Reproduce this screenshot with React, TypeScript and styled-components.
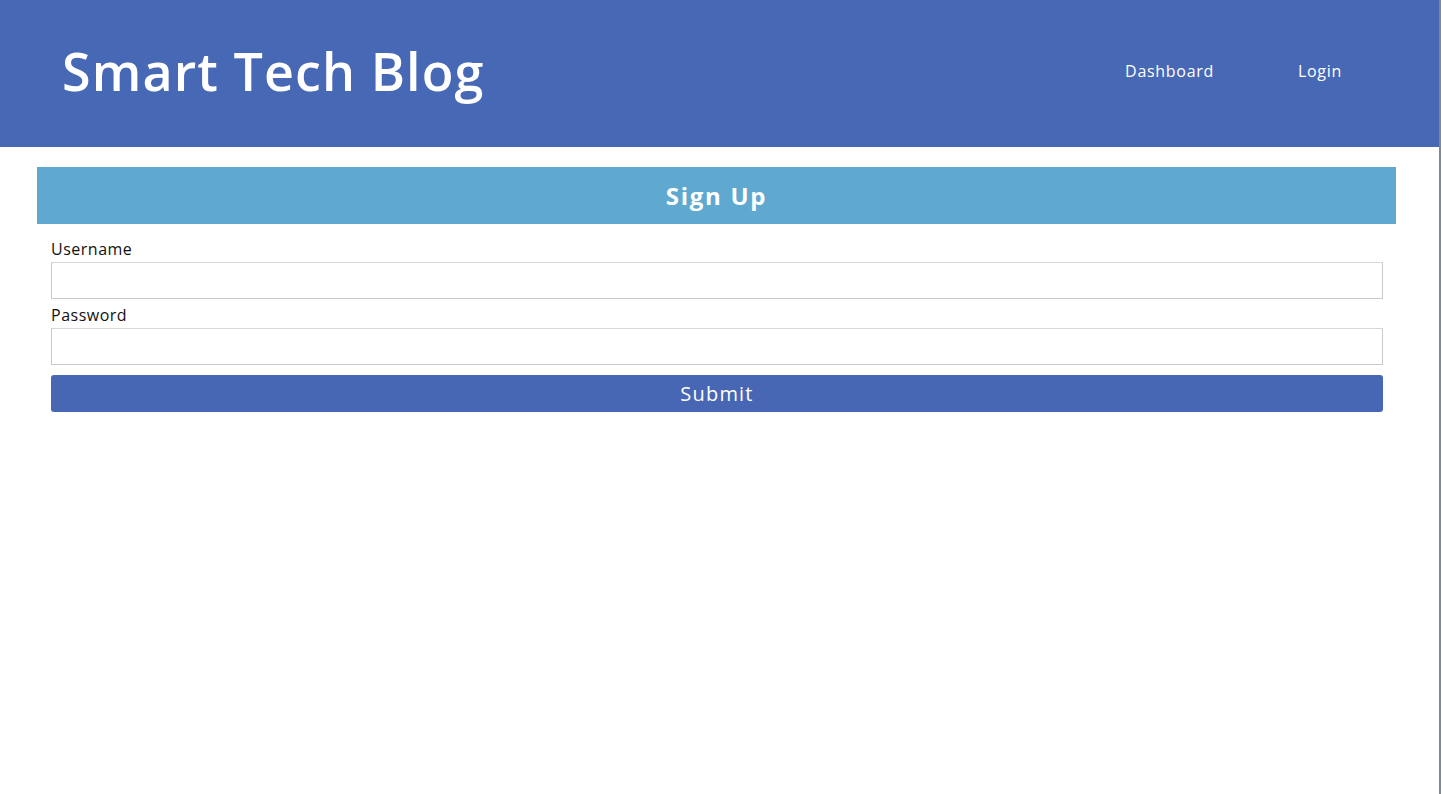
import React from "react";
import styled, { createGlobalStyle } from "styled-components";

const Global = createGlobalStyle`
  html, body { margin: 0; padding: 0; background: #fff; }
  body { font-family: "Open Sans", "Liberation Sans", sans-serif; }
  * { box-sizing: border-box; }
`;

const Page = styled.div`
  width: 1441px;
  min-height: 794px;
  border-right: 2px solid #7b8a9a;
`;

const Header = styled.header`
  height: 147px;
  background: #4768b5;
  display: flex;
  align-items: center;
  justify-content: space-between;
  padding: 0 97px 0 62px;
`;

const Title = styled.h1`
  margin: 0 0 7px 0;
  color: #fff;
  font-size: 52px;
  font-weight: 600;
  letter-spacing: 1.1px;
`;

const Nav = styled.nav`
  display: flex;
  gap: 84px;
  margin-bottom: 5px;
`;

const NavLink = styled.a`
  color: #fff;
  font-size: 16px;
  text-decoration: none;
  letter-spacing: 0.7px;
`;

const Card = styled.section`
  margin: 20px 0 0 37px;
  width: 1359px;
`;

const CardHead = styled.h2`
  margin: 0;
  height: 57px;
  background: #5fa8d0;
  color: #fff;
  font-size: 24px;
  font-weight: 700;
  display: flex;
  align-items: center;
  justify-content: center;
  letter-spacing: 1.7px;
  padding-bottom: 1px;
`;

const Form = styled.form`
  display: flex;
  flex-direction: column;
  padding: 15px 13px 0 14px;
`;

const Label = styled.label`
  font-size: 16px;
  color: #111;
  line-height: 22px;
  letter-spacing: 0.5px;
  margin-top: -1px;
  margin-bottom: 1px;
`;

const Input = styled.input`
  height: 37px;
  border: 1px solid #c9c9c9;
  border-top-color: #d8d8d8;
  margin: 1px 0 6px;
  font-size: 16px;
  padding: 0 8px;
`;

const Button = styled.button`
  height: 37px;
  margin-top: 4px;
  background: #4767b4;
  color: #fff;
  border: none;
  border-radius: 3px;
  font-family: inherit;
  font-size: 20px;
  letter-spacing: 1.2px;
`;

export default function App() {
  return (
    <Page>
      <Global />
      <Header>
        <Title>Smart Tech Blog</Title>
        <Nav>
          <NavLink href="#">Dashboard</NavLink>
          <NavLink href="#">Login</NavLink>
        </Nav>
      </Header>
      <Card>
        <CardHead>Sign Up</CardHead>
        <Form onSubmit={(e) => e.preventDefault()}>
          <Label htmlFor="u">Username</Label>
          <Input id="u" type="text" />
          <Label htmlFor="p">Password</Label>
          <Input id="p" type="password" />
          <Button type="submit">Submit</Button>
        </Form>
      </Card>
    </Page>
  );
}
